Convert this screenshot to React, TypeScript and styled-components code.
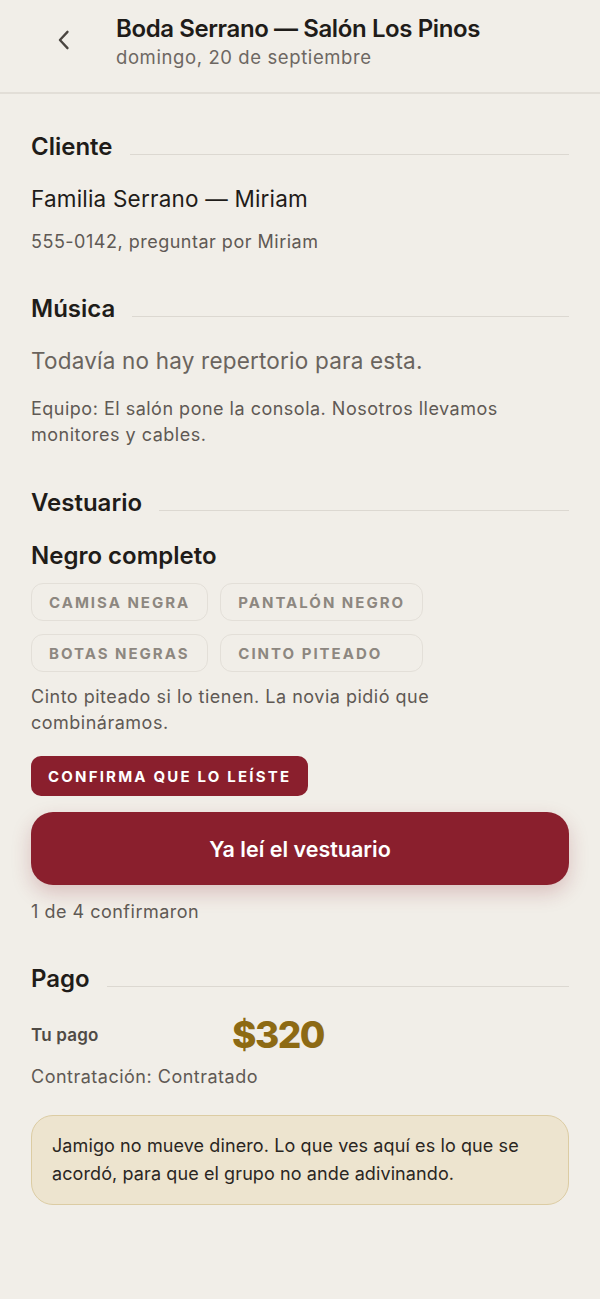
import styled, { createGlobalStyle } from 'styled-components';

const GlobalStyle = createGlobalStyle`
    * { box-sizing: border-box; }
    body {
        margin: 0;
        background: #f1eee8;
        font-family: Inter, 'Noto Sans', sans-serif;
        color: #1f1c19;
    }
`
const Page = styled.div`
    min-height: 1299px;
    background: #f1eee8;
`
const Header = styled.header`
    height: 94px;
    display: flex;
    align-items: flex-start;
    padding: 14px 0 0 50px;
    gap: 38px;
    border-bottom: 2px solid #e2ded7;
`
const BackButton = styled.button`
    border: none;
    background: none;
    padding: 0;
    margin-top: 12px;
    width: 28px;
    height: 28px;
    color: #4a4540;
    cursor: pointer;
`
const HeaderText = styled.div`
    display: flex;
    flex-direction: column;
`
const HeaderTitle = styled.h1`
    margin: 0;
    font-size: 24px;
    line-height: 30px;
    font-weight: 600;
    letter-spacing: -0.4px;
`
const HeaderSub = styled.div`
    font-size: 18.5px;
    line-height: 26px;
    color: #6d6762;
    letter-spacing: 0.6px;
`
const Content = styled.main`
    padding: 38px 31px 80px;
`
const Section = styled.section<{ space?: number }>`
    margin-bottom: ${p => p.space ?? 44}px;
`
const SectionHead = styled.div`
    display: flex;
    align-items: center;
    gap: 17px;
    margin-bottom: 22px;
    &::after {
        content: '';
        flex: 1;
        height: 1px;
        background: #dcd8d1;
        margin-top: 14px;
    }
`
const SectionTitle = styled.h2`
    margin: 0;
    font-size: 24px;
    line-height: 30px;
    font-weight: 600;
    letter-spacing: 0;
`
const BigText = styled.div<{ muted?: boolean }>`
    font-size: 22.5px;
    line-height: 30px;
    letter-spacing: 0.2px;
    color: ${p => p.muted ? '#6a645e' : '#1f1c19'};
`
const Small = styled.p<{ mt?: number }>`
    margin: ${p => p.mt ?? 0}px 0 0;
    font-size: 18px;
    line-height: 26px;
    color: #5f5954;
    letter-spacing: 0.5px;
`
const Subhead = styled.h3`
    margin: 0 0 11px;
    font-size: 24px;
    line-height: 32px;
    font-weight: 600;
    letter-spacing: 0;
`
const Chips = styled.div`
    display: grid;
    grid-template-columns: repeat(2, max-content);
    gap: 13px 12px;
    margin-bottom: 12px;
`
const Chip = styled.span`
    display: inline-flex;
    align-items: center;
    height: 38px;
    padding: 0 17px;
    border: 1.5px solid #e3dfd8;
    border-radius: 12px;
    font-size: 15px;
    font-weight: 700;
    letter-spacing: 2px;
    color: #8d8780;
    text-transform: uppercase;
`
const Badge = styled.span`
    display: inline-flex;
    align-items: center;
    height: 40px;
    padding: 0 17px;
    margin-top: 20px;
    border-radius: 10px;
    background: #8a1f2d;
    color: #fff;
    font-size: 15px;
    font-weight: 700;
    letter-spacing: 2.2px;
`
const PrimaryButton = styled.button`
    display: block;
    width: 100%;
    height: 73px;
    margin-top: 16px;
    border: none;
    border-radius: 22px;
    background: #8a1f2d;
    color: #fff;
    font-family: inherit;
    font-size: 21.5px;
    font-weight: 600;
    letter-spacing: 0;
    box-shadow: 0 8px 20px rgba(138, 31, 45, 0.22);
    cursor: pointer;
`
const PayRow = styled.div`
    display: grid;
    grid-template-columns: 201px auto;
    align-items: center;
    height: 38px;
    line-height: 38px;
`
const PayLabel = styled.span`
    font-size: 17px;
    font-weight: 600;
    color: #4f4a45;
    letter-spacing: 0.2px;
`
const PayAmount = styled.span`
    font-size: 37px;
    font-weight: 800;
    color: #8d6a14;
    letter-spacing: -1.5px;
`
const Notice = styled.div`
    margin-top: 25px;
    padding: 16px 20px 16px 20px;
    border: 1.5px solid #dccca3;
    border-radius: 22px;
    background: #ede4cf;
    font-size: 18px;
    line-height: 28px;
    letter-spacing: 0.1px;
    color: #2a2622;
`

const prendas = ['Camisa negra', 'Pantalón negro', 'Botas negras', 'Cinto piteado'];

function App() {
    return (
        <Page>
            <GlobalStyle />
            <Header>
                <BackButton aria-label="Volver">
                    <svg width="28" height="28" viewBox="0 0 24 24" fill="none" stroke="currentColor" strokeWidth="2" strokeLinecap="round" strokeLinejoin="round">
                        <path d="M15 5l-6.5 7L15 19" />
                    </svg>
                </BackButton>
                <HeaderText>
                    <HeaderTitle>Boda Serrano — Salón Los Pinos</HeaderTitle>
                    <HeaderSub>domingo, 20 de septiembre</HeaderSub>
                </HeaderText>
            </Header>
            <Content>
                <Section space={39}>
                    <SectionHead><SectionTitle>Cliente</SectionTitle></SectionHead>
                    <BigText>Familia Serrano — Miriam</BigText>
                    <Small mt={15}>555-0142, preguntar por Miriam</Small>
                </Section>
                <Section space={40}>
                    <SectionHead><SectionTitle>Música</SectionTitle></SectionHead>
                    <BigText muted>Todavía no hay repertorio para esta.</BigText>
                    <Small mt={20}>Equipo: El salón pone la consola. Nosotros llevamos monitores y cables.</Small>
                </Section>
                <Section space={39}>
                    <SectionHead><SectionTitle>Vestuario</SectionTitle></SectionHead>
                    <Subhead>Negro completo</Subhead>
                    <Chips>
                        {prendas.map(p => <Chip key={p}>{p}</Chip>)}
                    </Chips>
                    <Small>Cinto piteado si lo tienen. La novia pidió que combináramos.</Small>
                    <Badge>CONFIRMA QUE LO LEÍSTE</Badge>
                    <PrimaryButton>Ya leí el vestuario</PrimaryButton>
                    <Small mt={14}>1 de 4 confirmaron</Small>
                </Section>
                <Section>
                    <SectionHead><SectionTitle>Pago</SectionTitle></SectionHead>
                    <PayRow>
                        <PayLabel>Tu pago</PayLabel>
                        <PayAmount>$320</PayAmount>
                    </PayRow>
                    <Small mt={10}>Contratación: Contratado</Small>
                    <Notice>Jamigo no mueve dinero. Lo que ves aquí es lo que se acordó, para que el grupo no ande adivinando.</Notice>
                </Section>
            </Content>
        </Page>
    )
}

export default App;
